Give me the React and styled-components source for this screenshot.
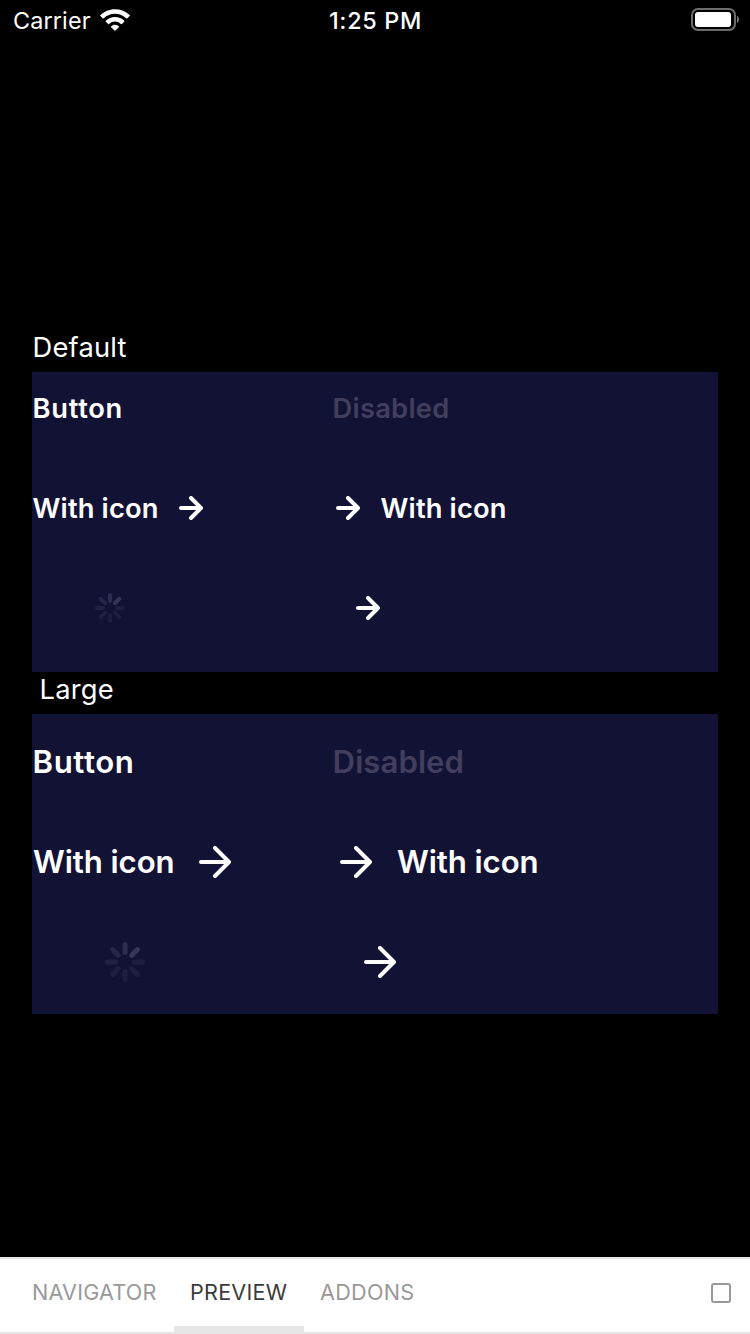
import React from "react";
import styled, { createGlobalStyle } from "styled-components";

const GlobalStyle = createGlobalStyle`
  * { box-sizing: border-box; }
  body { margin: 0; background: #000; }
`;

const Screen = styled.div`
  display: flex;
  flex-direction: column;
  width: 750px;
  height: 1334px;
  overflow: hidden;
  background: #000;
  color: #fff;
  font-family: Inter, "Liberation Sans", sans-serif;
`;

const StatusBar = styled.header`
  display: grid;
  grid-template-columns: 1fr auto 1fr;
  align-items: center;
  height: 40px;
  padding: 0 11px 0 13px;
`;

const Carrier = styled.div`
  display: flex;
  align-items: center;
  gap: 9px;
  font-size: 23.4px;
  line-height: 38px;
  letter-spacing: 0.13px;

  span { padding-top: 2px; }
`;

const Clock = styled.div`
  padding: 2px 1px 0 0;
  font-size: 23.4px;
  font-weight: 500;
  line-height: 38px;
  letter-spacing: 0.68px;
`;

const BatterySlot = styled.div`
  display: flex;
  justify-content: flex-end;
  padding-bottom: 2px;
`;

const Main = styled.main`
  flex: 1;
  padding: 290px 32px 0;
`;

const Label = styled.h2`
  height: 42px;
  margin: 0;
  padding: 0 0 0 ${(p) => p.$inset || "0.5px"};
  font-size: 27.3px;
  font-weight: 400;
  line-height: 35px;
  letter-spacing: 0.2px;
`;

const Panel = styled.section`
  display: grid;
  grid-template-columns: 300px 1fr;
  grid-template-rows: repeat(3, 100px);
  background: #121235;
`;

const Caption = styled.span`
  width: ${(p) => p.$width || "auto"};
  padding-left: ${(p) => p.$inset || "0.6px"};
  font-weight: ${(p) => p.$weight || 600};
  text-align: left;
  letter-spacing: ${(p) => p.$spacing || "0"};
`;

const Button = styled.button`
  display: flex;
  align-items: center;
  justify-self: start;
  height: ${(p) => (p.$large ? "96px" : "72px")};
  margin: 0;
  padding: 0 0 0 ${(p) => p.$inset || "0"};
  border: 0;
  background: none;
  color: #fff;
  font-family: inherit;
  font-size: ${(p) => (p.$large ? "31.2px" : "27.3px")};
  line-height: ${(p) => (p.$large ? "32px" : "28px")};
  white-space: nowrap;

  ${Caption} { padding-top: ${(p) => (p.$large ? "0" : "2px")}; }

  &:disabled { color: #413f5d; }
`;

const Icon = styled.svg`
  display: block;
  flex: none;
`;

const TabBar = styled.nav`
  display: flex;
  align-items: stretch;
  height: 77px;
  padding: 0 19px 0 16px;
  border-top: 2px solid #e6e6e6;
  background: linear-gradient(#e6e6e6, #e6e6e6) bottom / 100% 2px no-repeat #fff;
`;

const Tab = styled.button`
  width: ${(p) => p.$width};
  margin: 0;
  padding: 0 0 2px 16px;
  border: 0;
  border-bottom: 8px solid ${(p) => (p.$active ? "#e6e6e6" : "transparent")};
  background: none;
  color: ${(p) => (p.$active ? "#3b3b3b" : "#999")};
  font-family: inherit;
  font-size: 21.6px;
  text-align: left;
  letter-spacing: ${(p) => p.$spacing || "0.22px"};
  white-space: nowrap;
`;

const Toggle = styled.button`
  align-self: center;
  width: 20px;
  height: 20px;
  margin: -7px 0 0 auto;
  padding: 0;
  border: 2px solid #999;
  border-radius: 3px;
  background: none;
`;

function Wifi() {
  return (
    <Icon width="30" height="23" viewBox="0 0 30 23" fill="#fff">
      <path d="M15 .2C9.300.2 4.100 2.400.4 6.100a.7.7 0 0 0 0 1L2.700 9.300a.7.7 0 0 0 1 0A16.100 16.100 0 0 1 15 4.700c4.400 0 8.400 1.700 11.300 4.600a.7.7 0 0 0 1 0l2.300-2.200a.7.7 0 0 0 0-1A21 21 0 0 0 15 .2Z" />
      <path d="M15 8.100c-3.600 0-6.800 1.400-9.200 3.700a.7.7 0 0 0 0 1l2.300 2.200a.7.7 0 0 0 1 0 8.500 8.500 0 0 1 11.800 0 .7.7 0 0 0 1 0l2.300-2.200a.7.7 0 0 0 0-1A13.200 13.200 0 0 0 15 8.100Z" />
      <path d="M15 15.800c-1.500 0-2.800.6-3.800 1.500a.7.7 0 0 0 0 1l3.300 3.300a.7.7 0 0 0 1 0l3.300-3.300a.7.7 0 0 0 0-1A5.600 5.600 0 0 0 15 15.800Z" />
    </Icon>
  );
}

function Battery() {
  return (
    <Icon width="48" height="23" viewBox="0 0 48 23">
      <rect x="1" y="1" width="43" height="21" rx="6" fill="none" stroke="#6e6e6e" strokeWidth="2" />
      <rect x="4" y="4" width="36" height="15" rx="3" fill="#fff" />
      <path d="M46 8c1.300.6 2 1.900 2 3.500S47.300 14.400 46 15Z" fill="#777" />
    </Icon>
  );
}

function Arrow({ large }) {
  const size = large ? 32 : 24;
  const half = size / 2;
  return (
    <Icon width={size} height={size} viewBox={`0 0 ${size} ${size}`} fill="none" stroke="#fff" strokeWidth="4" strokeLinecap="round" strokeLinejoin="round">
      <path d={`M2 ${half}H${size - 2}M${half} 2L${size - 2} ${half}L${half} ${size - 2}`} />
    </Icon>
  );
}

const spokes = [
  [0, "#2d2d4c"],
  [45, "#373655"],
  [90, "#1e1e40"],
  [135, "#1e1e40"],
  [180, "#1e1e40"],
  [225, "#1f1f41"],
  [270, "#212143"],
  [315, "#262647"],
];

function Spinner({ large }) {
  const size = large ? 40 : 30;
  const width = large ? 5 : 4;
  const half = size / 2;
  const end = half - (large ? 7 : 5) - width / 2;
  return (
    <Icon width={size} height={size} viewBox={`0 0 ${size} ${size}`} strokeWidth={width} strokeLinecap="round">
      {spokes.map(([angle, color]) => (
        <path key={angle} d={`M${half} ${width / 2}V${end}`} stroke={color} transform={`rotate(${angle} ${half} ${half})`} />
      ))}
    </Icon>
  );
}

export default function App() {
  return (
    <>
      <GlobalStyle />
      <Screen>
        <StatusBar>
          <Carrier><span>Carrier</span><Wifi /></Carrier>
          <Clock>1:25 PM</Clock>
          <BatterySlot><Battery /></BatterySlot>
        </StatusBar>
        <Main>
          <Label>Default</Label>
          <Panel>
            <Button><Caption $spacing="0.7px">Button</Caption></Button>
            <Button disabled><Caption $spacing="0.25px">Disabled</Caption></Button>
            <Button><Caption $weight={560} $width="147px" $spacing="0.15px">With icon</Caption><Arrow /></Button>
            <Button $inset="4px"><Arrow /><Caption $weight={560} $inset="20.6px" $spacing="0.15px">With icon</Caption></Button>
            <Button $inset="63px"><Spinner /></Button>
            <Button $inset="24px"><Arrow /></Button>
          </Panel>
          <Label $inset="7.6px">Large</Label>
          <Panel>
            <Button $large><Caption $spacing="0.55px">Button</Caption></Button>
            <Button $large disabled><Caption $spacing="0.02px">Disabled</Caption></Button>
            <Button $large><Caption $weight={560} $width="167px" $inset="1px" $spacing="-0.1px">With icon</Caption><Arrow large /></Button>
            <Button $large $inset="8px"><Arrow large /><Caption $weight={560} $inset="25px" $spacing="-0.1px">With icon</Caption></Button>
            <Button $large $inset="73px"><Spinner large /></Button>
            <Button $large $inset="32px"><Arrow large /></Button>
          </Panel>
        </Main>
        <TabBar>
          <Tab $width="158px" $spacing="0.2px">NAVIGATOR</Tab>
          <Tab $width="130px" $active>PREVIEW</Tab>
          <Tab $width="126px" $spacing="0.28px">ADDONS</Tab>
          <Toggle aria-label="Toggle panel" />
        </TabBar>
      </Screen>
    </>
  );
}
